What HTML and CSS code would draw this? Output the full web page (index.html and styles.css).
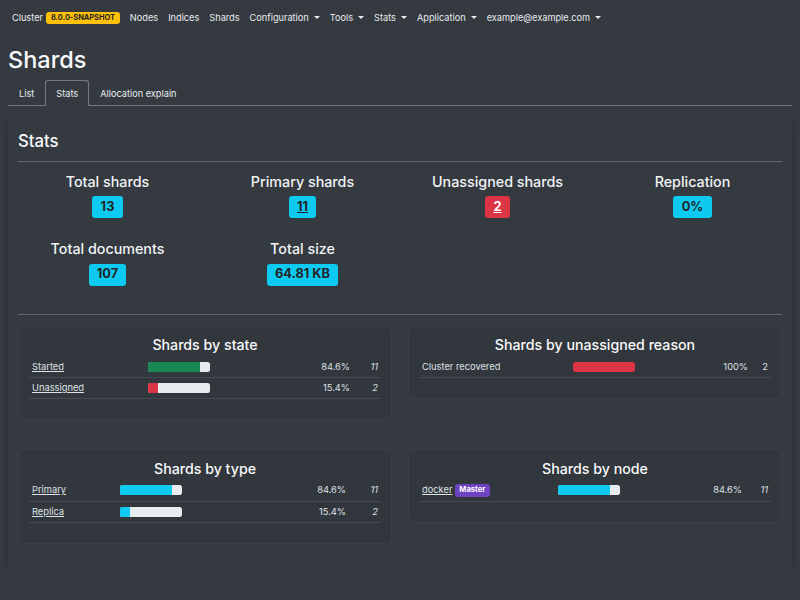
FILE: index.html
```html
<!DOCTYPE html>
<html lang="en">
<head>
<meta charset="utf-8">
<title>Shards - Stats</title>
<link rel="stylesheet" href="styles.css">
</head>
<body>
<nav class="navbar">
  <span class="brand">Cluster <span class="badge badge-warning">8.0.0-SNAPSHOT</span></span>
  <a class="nav-link" href="#">Nodes</a>
  <a class="nav-link" href="#">Indices</a>
  <a class="nav-link" href="#">Shards</a>
  <a class="nav-link dropdown" href="#">Configuration</a>
  <a class="nav-link dropdown" href="#">Tools</a>
  <a class="nav-link dropdown" href="#">Stats</a>
  <a class="nav-link dropdown" href="#">Application</a>
  <a class="nav-link dropdown" href="#">example@example.com</a>
</nav>
<main class="container">
  <h1 class="page-title">Shards</h1>
  <ul class="tabs">
    <li class="tab"><a href="#">List</a></li>
    <li class="tab active"><a href="#">Stats</a></li>
    <li class="tab"><a href="#">Allocation explain</a></li>
  </ul>
  <section class="card">
    <h2 class="card-heading">Stats</h2>
    <hr class="divider">
    <div class="stats-grid">
      <div class="stat"><div class="stat-label">Total shards</div><span class="badge badge-info">13</span></div>
      <div class="stat"><div class="stat-label">Primary shards</div><a href="#" class="badge badge-info link">11</a></div>
      <div class="stat"><div class="stat-label">Unassigned shards</div><a href="#" class="badge badge-danger link">2</a></div>
      <div class="stat"><div class="stat-label">Replication</div><span class="badge badge-info">0%</span></div>
      <div class="stat"><div class="stat-label">Total documents</div><span class="badge badge-info">107</span></div>
      <div class="stat"><div class="stat-label">Total size</div><span class="badge badge-info">64.81 KB</span></div>
    </div>
    <hr class="divider">
    <div class="dist-grid">
      <div class="dist-card">
        <h3 class="dist-title">Shards by state</h3>
        <table class="dist-table">
          <colgroup><col class="state-name"><col><col class="state-pct"><col class="state-count"></colgroup>
          <tr><td><a href="#">Started</a></td><td><div class="bar"><div class="fill fill-success" style="width:84.6%"></div></div></td><td class="pct">84.6%</td><td class="count">11</td></tr>
          <tr><td><a href="#">Unassigned</a></td><td><div class="bar"><div class="fill fill-danger" style="width:15.4%"></div></div></td><td class="pct">15.4%</td><td class="count">2</td></tr>
        </table>
      </div>
      <div class="dist-card">
        <h3 class="dist-title">Shards by unassigned reason</h3>
        <table class="dist-table">
          <colgroup><col class="reason-name"><col><col class="reason-pct"><col class="reason-count"></colgroup>
          <tr><td>Cluster recovered</td><td><div class="bar"><div class="fill fill-danger" style="width:100%"></div></div></td><td class="pct">100%</td><td class="count upright">2</td></tr>
        </table>
      </div>
      <div class="dist-card">
        <h3 class="dist-title">Shards by type</h3>
        <table class="dist-table">
          <colgroup><col class="type-name"><col><col class="type-pct"><col class="type-count"></colgroup>
          <tr><td><a href="#">Primary</a></td><td><div class="bar"><div class="fill fill-info" style="width:84.6%"></div></div></td><td class="pct">84.6%</td><td class="count">11</td></tr>
          <tr><td><a href="#">Replica</a></td><td><div class="bar"><div class="fill fill-info" style="width:15.4%"></div></div></td><td class="pct">15.4%</td><td class="count">2</td></tr>
        </table>
      </div>
      <div class="dist-card">
        <h3 class="dist-title">Shards by node</h3>
        <table class="dist-table">
          <colgroup><col class="node-name"><col><col class="node-pct"><col class="node-count"></colgroup>
          <tr><td><a href="#">docker</a> <span class="badge badge-master">Master</span></td><td><div class="bar"><div class="fill fill-info" style="width:84.6%"></div></div></td><td class="pct">84.6%</td><td class="count">11</td></tr>
        </table>
      </div>
    </div>
  </section>
</main>
</body>
</html>
```

FILE: styles.css
```css
* { box-sizing: border-box; }

html, body {
  margin: 0;
  background: #343a40;
  color: #dee2e6;
  font-family: Inter, "Noto Sans", "Liberation Sans", sans-serif;
}

a { color: inherit; }

.navbar {
  display: flex;
  align-items: center;
  height: 35px;
  padding: 0 7px;
  font-size: 9.2px;
}

.brand {
  display: inline-flex;
  align-items: center;
  gap: 3px;
  padding: 0 5px;
  color: #e9ecef;
}

.nav-link {
  padding: 0 5px;
  text-decoration: none;
  color: #e9ecef;
}

.dropdown::after {
  content: "";
  display: inline-block;
  margin-left: 5px;
  vertical-align: 2px;
  border-top: 3px solid #e9ecef;
  border-left: 3px solid transparent;
  border-right: 3px solid transparent;
}

.badge {
  display: inline-block;
  font-weight: 700;
  line-height: 1;
  border-radius: 3px;
  text-align: center;
  white-space: nowrap;
}

.badge-warning {
  background: #ffc107;
  color: #212529;
  font-size: 7.4px;
  padding: 2.3px 5px;
}

.container {
  padding: 0 8px;
}

.page-title {
  margin: 10.5px 0 6px;
  font-size: 23.5px;
  font-weight: 500;
  line-height: 1.2;
  color: #f8f9fa;
}

.tabs {
  display: flex;
  list-style: none;
  margin: 0;
  padding: 0;
  border-bottom: 1px solid #737a81;
  font-size: 9.2px;
}

.tab {
  margin-bottom: -1px;
}

.tab a {
  display: block;
  height: 26px;
  line-height: 25px;
  padding: 0 10px;
  text-decoration: none;
  color: #e9ecef;
  border: 1px solid transparent;
  border-radius: 3px 3px 0 0;
}

.tab.active a {
  border-color: #737a81 #737a81 #343a40;
  background: #343a40;
}

.card {
  margin-top: 12px;
  padding: 13.5px 10px 24px;
  background: #343a40;
  border-radius: 4px;
  box-shadow: 0 3px 6px rgba(0, 0, 0, 0.28);
}

.card-heading {
  margin: 0;
  font-size: 16.7px;
  font-weight: 500;
  line-height: 1.2;
  color: #f8f9fa;
}

.divider {
  margin: 10px 0 0;
  border: 0;
  border-top: 1px solid #5f646a;
}

.stats-grid {
  display: grid;
  grid-template-columns: repeat(4, 1fr);
  row-gap: 22px;
  margin: 0 -8px;
  padding: 11px 0 18px;
}

.stat {
  display: flex;
  flex-direction: column;
  align-items: center;
}

.stat-label {
  font-size: 14.3px;
  font-weight: 500;
  line-height: 1.2;
  margin-bottom: 6px;
  color: #f1f3f5;
}

.badge-info,
.badge-danger {
  font-size: 12.8px;
  padding: 4.6px 8.3px;
  text-decoration: none;
  color: #212529;
}

.badge-info { background: #0dcaf0; }

.badge-danger {
  background: #dc3545;
  color: #fff;
}

.badge.link { text-decoration: underline; }

.dist-grid {
  display: grid;
  grid-template-columns: 1fr 1fr;
  column-gap: 16px;
  row-gap: 29px;
  align-items: start;
  padding-top: 11px;
}

.dist-card {
  padding: 9.5px 10px 20px;
  background: #32373d;
  border: 1px solid #3a3f45;
  border-radius: 4px;
}

.dist-title {
  margin: 0 0 3.5px;
  text-align: center;
  font-size: 14.2px;
  font-weight: 500;
  line-height: 1.2;
  color: #f8f9fa;
}

.dist-table {
  width: 100%;
  table-layout: fixed;
  border-collapse: collapse;
  font-size: 9.3px;
  color: #dee2e6;
}

.dist-table td {
  padding: 3px;
  line-height: 14px;
  height: 21px;
  border-bottom: 1px solid #454a50;
  white-space: nowrap;
  vertical-align: middle;
}

.state-name { width: 116px; }
.state-pct { width: 60px; }
.state-count { width: 28px; }

.reason-name { width: 151px; }
.reason-pct { width: 60px; }
.reason-count { width: 20px; }

.type-name { width: 88px; }
.type-pct { width: 60px; }
.type-count { width: 32px; }

.node-name { width: 136px; }
.node-pct { width: 60px; }
.node-count { width: 26px; }

.pct { text-align: right; }

.count {
  text-align: right;
  font-style: italic;
}

.count.upright { font-style: normal; }

.bar {
  width: 62px;
  height: 10px;
  background: #e9ecef;
  border-radius: 2.5px;
  overflow: hidden;
}

.fill { height: 100%; }
.fill-success { background: #198754; }
.fill-danger { background: #dc3545; }
.fill-info { background: #0dcaf0; }

.badge-master {
  background: #6f42c1;
  color: #fff;
  font-size: 7.6px;
  padding: 2.7px 4.3px;
  vertical-align: 1px;
}
```
